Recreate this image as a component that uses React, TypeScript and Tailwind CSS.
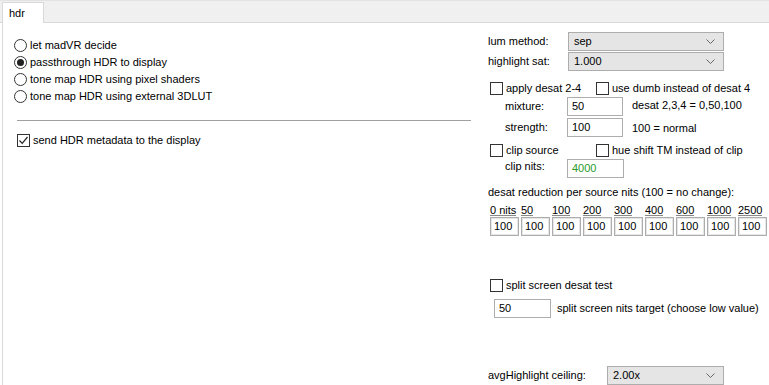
import React from "react";

const font = { fontFamily: '"Liberation Sans", Arial, sans-serif' };

function Radio({ checked, label }: { checked?: boolean; label: string }) {
  return (
    <div className="flex items-center h-[17px]">
      <span className="w-[13px] h-[13px] rounded-full border border-[#333] bg-white flex items-center justify-center">
        {checked && <span className="w-[7px] h-[7px] rounded-full bg-[#222]" />}
      </span>
      <span className="ml-[3px]">{label}</span>
    </div>
  );
}

function Check({ checked, label }: { checked?: boolean; label: string }) {
  return (
    <div className="flex items-center h-[15px]">
      <span className="w-[13px] h-[13px] border border-[#333] bg-white flex items-center justify-center">
        {checked && (
          <svg width="11" height="11" viewBox="0 0 11 11">
            <path d="M1.5 5.5 L4.2 8.3 L9.5 2" fill="none" stroke="#222" strokeWidth="1.2" />
          </svg>
        )}
      </span>
      <span className="ml-[3px]">{label}</span>
    </div>
  );
}

function Select({ value, w }: { value: string; w: string }) {
  return (
    <div className={`${w} h-[19px] bg-[#e5e5e5] border border-[#adadad] flex items-center justify-between pl-[5px] pr-[8px]`}>
      <span>{value}</span>
      <svg width="9" height="5" viewBox="0 0 9 5">
        <path d="M0.5 0.5 L4.5 4.5 L8.5 0.5" fill="none" stroke="#666" strokeWidth="1" />
      </svg>
    </div>
  );
}

function Input({ value, w, green }: { value: string; w: string; green?: boolean }) {
  return (
    <div className={`${w} h-[19px] bg-white border border-[#adadad] flex items-center pl-[4px] ${green ? "text-[#2a9a2a]" : ""}`}>
      {value}
    </div>
  );
}

const nits = ["0 nits", "50", "100", "200", "300", "400", "600", "1000", "2500"];

export default function App() {
  return (
    <div className="w-[769px] h-[385px] bg-white overflow-hidden text-[11px] text-black leading-none" style={font}>
      {/* tab strip */}
      <div className="h-[23px] bg-[#f0f0f0] border-t border-[#e3e3e3] border-b border-b-[#d9d9d9] flex items-end pl-[2px]">
        <div className="w-[42px] h-[21px] bg-white border border-[#d9d9d9] border-b-0 -mb-px flex items-center pl-[6px]">hdr</div>
      </div>

      <div className="flex h-full border-l border-[#d9d9d9] ml-[2px]">
        {/* left column */}
        <div className="w-[470px] pl-[11px] pt-[14px]">
          <Radio label="let madVR decide" />
          <Radio checked label="passthrough HDR to display" />
          <Radio label="tone map HDR using pixel shaders" />
          <Radio label="tone map HDR using external 3DLUT" />
          <div className="mt-[15px] ml-[3px] w-[454px] border-t border-[#a0a0a0]" />
          <div className="mt-[12px] ml-[3px]">
            <Check checked label="send HDR metadata to the display" />
          </div>
        </div>

        {/* right column */}
        <div className="pl-[15px] pt-[9px] flex-1">
          <div className="flex items-center h-[19px]">
            <span className="w-[80px]">lum method:</span>
            <Select value="sep" w="w-[156px]" />
          </div>
          <div className="flex items-center h-[19px] mt-[1px]">
            <span className="w-[80px]">highlight sat:</span>
            <Select value="1.000" w="w-[156px]" />
          </div>

          <div className="flex items-center mt-[10px] ml-[2px]">
            <div className="w-[106px]"><Check label="apply desat 2-4" /></div>
            <Check label="use dumb instead of desat 4" />
          </div>
          <div className="flex items-center h-[19px] mt-[1px] ml-[17px]">
            <span className="w-[62px]">mixture:</span>
            <Input value="50" w="w-[56px]" />
            <span className="ml-[9px] -mt-[2px]">desat 2,3,4 = 0,50,100</span>
          </div>
          <div className="flex items-center h-[19px] mt-[2px] ml-[17px]">
            <span className="w-[62px]">strength:</span>
            <Input value="100" w="w-[56px]" />
            <span className="ml-[9px] mt-[2px]">100 = normal</span>
          </div>

          <div className="flex items-center mt-[6px] ml-[2px]">
            <div className="w-[106px]"><Check label="clip source" /></div>
            <Check label="hue shift TM instead of clip" />
          </div>
          <div className="flex items-center h-[19px] mt-[1px] ml-[17px]">
            <span className="w-[62px] -mt-[4px]">clip nits:</span>
            <Input value="4000" w="w-[57px]" green />
          </div>

          <div className="mt-[9px]">desat reduction per source nits (100 = no change):</div>

          <div className="flex gap-[2px] mt-[7px] ml-[2px]">
            {nits.map((n) => (
              <div key={n} className="w-[29px] shrink-0">
                <div className="h-[11px] border-b border-[#888] w-fit leading-[11px]">{n}</div>
                <div className="mt-[1px] h-[19px] border border-[#adadad] bg-white flex items-center pl-[3px] shadow-[inset_0_0_0_1px_#e6e6e6]">100</div>
              </div>
            ))}
          </div>

          <div className="mt-[42px] ml-[2px]">
            <Check label="split screen desat test" />
          </div>
          <div className="flex items-center h-[19px] mt-[6px] ml-[6px]">
            <Input value="50" w="w-[57px]" />
            <span className="ml-[6px]">split screen nits target (choose low value)</span>
          </div>

          <div className="flex items-center h-[19px] mt-[48px]">
            <span className="w-[119px]">avgHighlight ceiling:</span>
            <Select value="2.00x" w="w-[117px]" />
          </div>
        </div>
      </div>
    </div>
  );
}
